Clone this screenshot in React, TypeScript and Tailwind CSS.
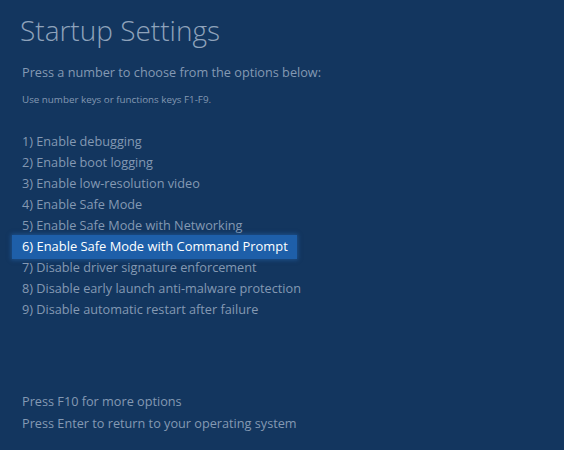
import React from 'react';

const options = [
  '1) Enable debugging',
  '2) Enable boot logging',
  '3) Enable low-resolution video',
  '4) Enable Safe Mode',
  '5) Enable Safe Mode with Networking',
  '6) Enable Safe Mode with Command Prompt',
  '7) Disable driver signature enforcement',
  '8) Disable early launch anti-malware protection',
  '9) Disable automatic restart after failure',
];

const App = () => {
  return (
    <div
      className="w-[564px] h-[450px] bg-[#13365f] text-[#8499b3] flex flex-col overflow-hidden"
      style={{ fontFamily: '"Open Sans", "Noto Sans", sans-serif' }}
    >
      <div className="pl-[20px] pt-[11px]">
        <h1 className="text-[28px] leading-[38px] text-[#8fa3bb] font-light">Startup Settings</h1>
        <p className="mt-[14px] pl-[2px] text-[12.7px] leading-[18px]">Press a number to choose from the options below:</p>
        <p className="mt-[12px] pl-[2px] text-[9.8px] leading-[14px]">Use number keys or functions keys F1-F9.</p>
      </div>

      <ul className="mt-[24px] flex flex-col">
        {options.map((opt, i) => (
          <li
            key={i}
            className={
              i === 5
                ? '-my-[1.5px] ml-[12px] w-[285px] h-[24px] pl-[10px] bg-[#1e5fa9] shadow-[0_0_4px_1px_rgba(40,110,190,0.5)] text-white text-[12.9px] whitespace-nowrap flex items-center'
                : 'pl-[22px] h-[21px] text-[12.7px] leading-[21px] whitespace-nowrap'
            }
          >
            {opt}
          </li>
        ))}
      </ul>

      <div className="mt-auto pb-[16px] pl-[22px] flex flex-col">
        <p className="text-[12.7px] leading-[22px]">Press F10 for more options</p>
        <p className="text-[12.7px] leading-[22px]">Press Enter to return to your operating system</p>
      </div>
    </div>
  );
};

export default App;
